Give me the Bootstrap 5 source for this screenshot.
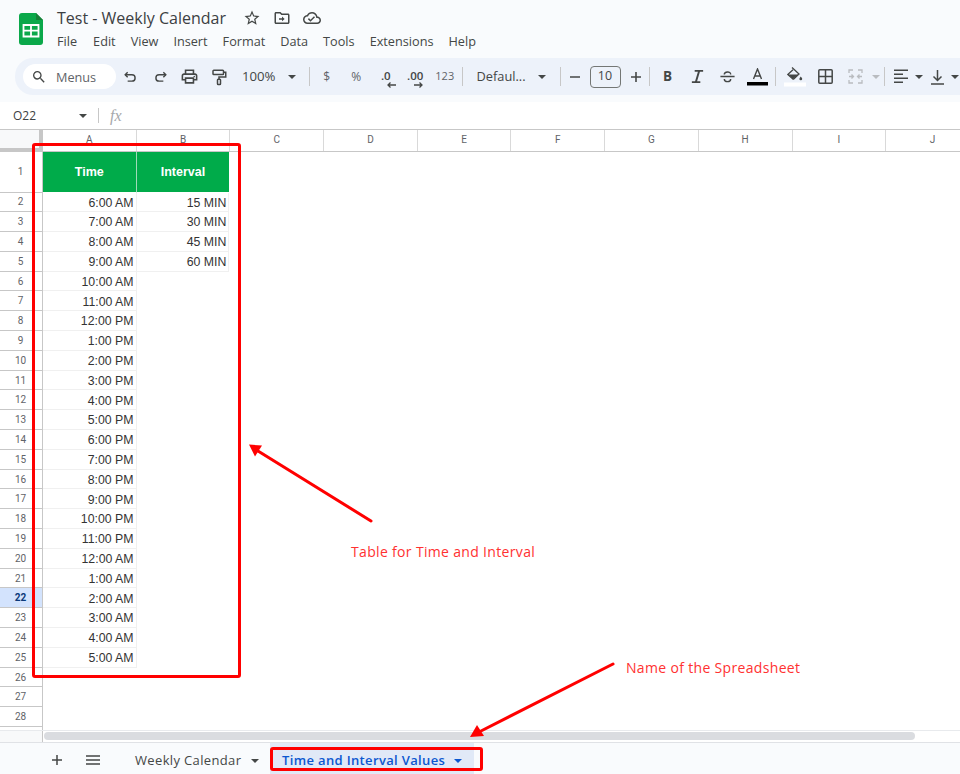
<!DOCTYPE html>
<html lang="en">
<head>
<meta charset="utf-8">
<title>Test - Weekly Calendar</title>
<link href="https://cdn.jsdelivr.net/npm/bootstrap@5.3.0/dist/css/bootstrap.min.css" rel="stylesheet">
<style>
html,body{height:774px;overflow:hidden;background:#fff}
body{font-family:"Open Sans",sans-serif;color:#444746;position:relative}
.appframe{height:774px;width:960px;overflow:hidden}
.tophead{height:58px;background:#f9fbfd;padding:7px 0 0 19px;flex:none}
.logoholder{width:24px;margin:6px 14px 0 0;flex:none}
.doctitle{font-size:16px;line-height:22px;color:#3c4043;height:22px}
.titleicons{margin-left:17px;gap:12px;align-items:center;color:#444746}
.menurow{gap:15px;font-size:12.7px;line-height:18px;margin-top:3px;color:#444746}
.menurow span:first-child{margin-right:1px}
.toolwrap{height:44px;background:#f9fbfd;padding-left:15px;flex:none}
.toolpill{height:37px;background:#edf2fa;border-radius:18px 0 0 18px;padding-left:8px;align-items:center;width:960px;overflow:hidden}
.searchpill{width:93px;height:25px;background:#fff;border-radius:13px;flex:none;padding-left:8px;font-size:12.7px;gap:9px;color:#5f6368;align-items:center}
.searchpill span{padding-top:2px}
.ti{flex:none;display:flex;align-items:center;justify-content:center;height:37px;width:29.5px;color:#444746;font-size:12px}
.tw30{width:30px}.tw22{width:22px}.tw26{width:26px}.tw10{width:11px}.tw8{width:8px}.tw32{width:32px}
.tsep{flex:none;width:6px;height:37px;display:flex;align-items:center;justify-content:center}
.tsep::after{content:"";display:block;width:1px;height:19px;background:#c7c7c7}
.zoomblock{flex:none;width:72px;height:37px;display:flex;align-items:center;padding:1px 0 0 8px;font-size:13.2px;color:#444746}
.fontblock{flex:none;width:92px;height:37px;display:flex;align-items:center;padding:0 0 0 11px;font-size:12.8px;color:#444746}
.tcaret{display:inline-block;width:0;height:0;border-left:4px solid transparent;border-right:4px solid transparent;border-top:4px solid #444746;flex:none}
.tcaretoff{border-top-color:#b9bcc0}
.zoomblock .tcaret{margin-left:12px}.fontblock .tcaret{margin-left:12px}
.sizebox{flex:none;width:31px;height:22px;margin:0 4px;border:1px solid #747775;border-radius:4px;font-size:12.5px;display:flex;align-items:center;justify-content:center;color:#444746}
.smallfmt{font-size:12px;color:#5f6368}
.smallnum{font-size:11px;color:#5f6368}
.decstack{font-weight:600;font-size:11.5px;line-height:11px;display:flex;flex-direction:column;align-items:flex-end;color:#444746;padding-top:4px}
.decstack svg{margin:1px -5px 0 0}
.boldb{font-weight:700;font-size:13.5px;color:#444746}
.formulabar{height:27px;background:#fff;flex:none;padding-left:13px;align-items:center;font-size:12px;color:#3c4043}
.namebox{width:66px;flex:none}
.fxsep{width:1px;height:15px;background:#c7c7c7;margin:0 11px 0 11px;flex:none}
.fxlabel{font-family:"Liberation Serif",serif;font-style:italic;font-size:16px;color:#a6a8ab;line-height:1}
.colheads{height:23px;flex:none;border-top:1px solid #c7c7c7;border-bottom:1px solid #c7c7c7;background:#fff;font-size:10px;color:#5f6368}
.corner{width:43px;flex:none;background:#f8f9fa;border-right:4px solid #c7c7c7;position:relative}
.corner::after{content:"";position:absolute;left:0;right:-4px;bottom:0;height:3px;background:#c7c7c7}
.colh{width:93.7px;flex:none;border-right:1px solid #d9d9d9;text-align:center;line-height:20px;font-family:Roboto,sans-serif}
.sheetarea{flex:1 1 auto;min-height:0;overflow:hidden;background:#fff}
.sheetgrid{display:grid;grid-template-columns:43px 93.5px 92.8px;grid-template-rows:40.5px;grid-auto-rows:19.8px;font-family:"Liberation Sans",sans-serif;font-size:12.3px;color:#333}
.rh{grid-column:1;border-right:1px solid #c7c7c7;border-bottom:1px solid #c7c7c7;text-align:center;font-family:Roboto,sans-serif;font-size:10px;color:#5f6368;display:flex;align-items:center;justify-content:center;padding-right:1px;background:#fff}
.rhsel{background:#d3e3fd;color:#0b3a7a;font-weight:700}
.ca,.cb{display:flex;align-items:center;justify-content:flex-end;padding:2px 2px 0 0;border-right:1px solid #f0f0f0;border-bottom:1px solid #f0f0f0}
.ca{grid-column:2}.cb{grid-column:3}
.hcell{background:#00ab4a;color:#fff;font-weight:700;font-size:12.5px;justify-content:center;padding:2px 0 0;border-bottom:1px solid #fff;border-right:1px solid #9fdab8}
.hcell.cb{border-right:0}
.scrollrow{height:12px;flex:none;background:#fff;border-top:1px solid #e8eaed;padding:1px 45px 0 0}
.scrollcorner{width:43px;background:#f8f9fa;border-right:1px solid #c7c7c7;flex:none;margin-top:-1px}
.thumb{width:871px;height:8px;background:#dadce0;border-radius:4px;margin-left:1px}
.tabbar{height:32px;flex:none;background:#f9fbfd;border-top:1px solid #e0e2e6;font-size:13px;letter-spacing:.35px;color:#444746;align-items:stretch}
.tabtool{flex:none;display:flex;align-items:center;justify-content:center;padding-top:3px}
.tabplus{width:28px;margin-left:43px}
.tabmenu{width:44px}
.tabone{width:128px;margin-left:20px;display:flex;align-items:center;gap:10px;flex:none;padding-top:4px}
.tabactive{width:204px;margin-left:7px;background:#e1e9f7;color:#0b57d0;font-weight:600;display:flex;align-items:center;padding:4px 0 0 12px;gap:9px;flex:none}
.tabactive .tcaret{border-top-color:#0b57d0}
.redbox{position:absolute;border:3px solid #ff0000;border-radius:3px;pointer-events:none}
.boxtable{left:32px;top:143px;width:209px;height:535px}
.boxtab{left:270px;top:747px;width:213px;height:24px}
.arrows{position:absolute;left:0;top:0}
.note{position:absolute;color:#ff3131;font-family:"Open Sans",sans-serif;font-size:14px;letter-spacing:.33px;line-height:18px;white-space:nowrap}
.notea{left:351px;top:543px}
.noteb{left:626px;top:659px}
</style>
</head>
<body>
<div class="appframe d-flex flex-column">
  <header class="tophead d-flex">
    <div class="logoholder">
      <svg width="24" height="32" viewBox="0 0 24 32"><path d="M3 0h14l7 7v22a3 3 0 0 1-3 3H3a3 3 0 0 1-3-3V3a3 3 0 0 1 3-3z" fill="#0ba84a"/><path d="M17 0l7 7h-7z" fill="#188038"/><path d="M4.500 12h15v11.500h-15z" fill="none" stroke="#fff" stroke-width="1.800"/><path d="M4.500 17.700h15M12 12v11.500" stroke="#fff" stroke-width="1.800"/></svg>
    </div>
    <div>
      <div class="d-flex">
        <div class="doctitle">Test - Weekly Calendar</div>
        <div class="titleicons d-flex">
          <svg width="18" height="18" viewBox="0 0 24 24" fill="#444746"><path d="M22 9.240l-7.190-.620L12 2 9.190 8.630 2 9.240l5.460 4.730L5.820 21 12 17.270 18.180 21l-1.630-7.030L22 9.240zM12 15.400l-3.760 2.270 1-4.280-3.320-2.880 4.380-.380L12 6.100l1.710 4.040 4.380.380-3.320 2.880 1 4.280L12 15.400z"/></svg>
          <svg width="18" height="18" viewBox="0 0 24 24" fill="#444746"><path d="M20 6h-8l-2-2H4c-1.100 0-2 .9-2 2v12c0 1.100.9 2 2 2h16c1.100 0 2-.9 2-2V8c0-1.100-.9-2-2-2zm0 12H4V6h5.170l2 2H20v10z"/><path d="M12 10v2.200H8v2h4v2.200l3.500-3.200z"/></svg>
          <svg width="18" height="18" viewBox="0 0 24 24" fill="#444746"><path d="M19.350 10.040C18.670 6.590 15.640 4 12 4 9.110 4 6.600 5.640 5.350 8.040 2.340 8.360 0 10.910 0 14c0 3.310 2.690 6 6 6h13c2.760 0 5-2.240 5-5 0-2.640-2.050-4.780-4.650-4.960zM19 18H6c-2.210 0-4-1.790-4-4 0-2.050 1.530-3.760 3.560-3.970l1.070-.110.500-.950C8.080 7.140 9.940 6 12 6c2.620 0 4.880 1.860 5.390 4.430l.300 1.500 1.530.110c1.560.1 2.780 1.410 2.780 2.960 0 1.650-1.350 3-3 3zm-9-3.820l-2.090-2.090L6.500 13.500 10 17l6.010-6.010-1.410-1.410z"/></svg>
        </div>
      </div>
      <nav class="menurow d-flex"><span>File</span><span>Edit</span><span>View</span><span>Insert</span><span>Format</span><span>Data</span><span>Tools</span><span>Extensions</span><span>Help</span></nav>
    </div>
  </header>

  <div class="toolwrap">
    <div class="toolpill d-flex">
      <div class="searchpill d-flex">
        <svg width="16" height="16" viewBox="0 0 24 24" fill="#444746"><path d="M15.500 14h-.79l-.28-.27A6.471 6.471 0 0 0 16 9.500 6.500 6.500 0 1 0 9.500 16c1.610 0 3.090-.59 4.230-1.570l.27.280v.79l5 4.990L20.490 19l-4.990-5zm-6 0C7.010 14 5 11.990 5 9.500S7.010 5 9.500 5 14 7.010 14 9.500 11.990 14 9.500 14z"/></svg>
        <span>Menus</span>
      </div>
      <div class="ti"><svg width="17" height="17" viewBox="0 0 24 24" fill="none" stroke="#444746" stroke-width="2"><path d="M8 6L4.500 9.500 8 13"/><path d="M4.500 9.500H14a4.500 4.500 0 0 1 0 9H8"/></svg></div>
      <div class="ti"><svg width="17" height="17" viewBox="0 0 24 24" fill="none" stroke="#444746" stroke-width="2"><path d="M16 6l3.500 3.500L16 13"/><path d="M19.500 9.500H10a4.500 4.500 0 0 0 0 9h6"/></svg></div>
      <div class="ti"><svg width="19" height="19" viewBox="0 0 24 24" fill="#444746"><path d="M19 8h-1V3H6v5H5c-1.660 0-3 1.340-3 3v6h4v4h12v-4h4v-6c0-1.660-1.340-3-3-3zM8 5h8v3H8V5zm8 12v2H8v-4h8v2zm2-2v-2H6v2H4v-4c0-.55.45-1 1-1h14c.55 0 1 .45 1 1v4h-2z"/><circle cx="18" cy="12" r="1"/></svg></div>
      <div class="ti"><svg width="18" height="18" viewBox="0 0 24 24" fill="none" stroke="#444746" stroke-width="2"><rect x="4" y="3" width="14" height="5.500" rx="1"/><path d="M18 5.500h3v6.500h-9v3"/><rect x="10" y="15" width="4" height="7" rx="1"/></svg></div>
      <div class="zoomblock"><span>100%</span><span class="tcaret"></span></div>
      <div class="tsep"></div>
      <div class="ti smallfmt">$</div>
      <div class="ti smallfmt">%</div>
      <div class="ti"><div class="decstack"><span>.0</span><svg width="9" height="6" viewBox="0 0 9 6" fill="none" stroke="#444746" stroke-width="1.300"><path d="M9 3H1M3.500.5L1 3l2.500 2.500"/></svg></div></div>
      <div class="ti"><div class="decstack"><span>.00</span><svg class="me-0" width="9" height="6" viewBox="0 0 9 6" fill="none" stroke="#444746" stroke-width="1.300"><path d="M0 3h8M5.500.5L8 3 5.500 5.500"/></svg></div></div>
      <div class="ti smallnum">123</div>
      <div class="tsep"></div>
      <div class="fontblock"><span>Defaul...</span><span class="tcaret"></span></div>
      <div class="tsep"></div>
      <div class="ti tw22"><svg width="12" height="12" viewBox="0 0 12 12"><path d="M1 6h10" stroke="#444746" stroke-width="1.600"/></svg></div>
      <div class="sizebox">10</div>
      <div class="ti tw22"><svg width="12" height="12" viewBox="0 0 12 12"><path d="M1 6h10M6 1v10" stroke="#444746" stroke-width="1.600"/></svg></div>
      <div class="tsep"></div>
      <div class="ti tw30 boldb">B</div>
      <div class="ti tw30"><svg width="15" height="15" viewBox="0 0 16 16" fill="none" stroke="#444746" stroke-width="2"><path d="M5 2h9M2 14h9M9.800 2L6.200 14"/></svg></div>
      <div class="ti tw30"><svg width="17" height="17" viewBox="0 0 24 24" fill="none" stroke="#444746" stroke-width="2"><path d="M2 12h20M7.500 9c0-4 9-5 9 0M7.500 15.500c0 5 9 5 9 0"/></svg></div>
      <div class="ti tw30"><svg width="21" height="18" viewBox="0 0 21 18"><path d="M6.500 11L10.500 1l4 10M7.800 8h5.400" fill="none" stroke="#444746" stroke-width="1.400"/><rect y="14" width="21" height="3.500" fill="#000"/></svg></div>
      <div class="tsep"></div>
      <div class="ti tw32"><svg width="22" height="20" viewBox="0 0 22 20"><path d="M8 0.500l7 6.500-5 4.800c-.4.4-1 .4-1.400 0L3.800 7.500 9 2.700" fill="none" stroke="#444746" stroke-width="1.300"/><path d="M4 7.500h10.500L9.300 12z" fill="#444746"/><path d="M16.800 9.500c-.9 1.200-1.400 1.900-1.400 2.400a1.400 1.400 0 0 0 2.800 0c0-.5-.5-1.200-1.400-2.400z" fill="#444746"/><rect y="15.500" width="22" height="4" fill="#fff"/></svg></div>
      <div class="ti tw30"><svg width="15" height="15" viewBox="0 0 15 15" fill="none" stroke="#444746" stroke-width="1.500"><rect x=".8" y=".8" width="13.400" height="13.400" rx="1"/><path d="M7.500 1v13M1 7.500h13"/></svg></div>
      <div class="ti tw30"><svg width="15" height="15" viewBox="0 0 15 15" fill="none" stroke="#b9bcc0" stroke-width="1.300"><path d="M1 4V1h4M1 11v3h4M14 4V1h-4M14 11v3h-4M1 7.500h4.500M3.500 5.500l2 2-2 2M14 7.500H9.500M11.500 5.500l-2 2 2 2"/></svg></div>
      <div class="ti tw10"><span class="tcaret tcaretoff"></span></div>
      <div class="tsep"></div>
      <div class="ti tw26"><svg width="14" height="15" viewBox="0 0 14 15" fill="#444746"><rect width="14" height="1.500" y=".5"/><rect width="9" height="1.500" y="4.500"/><rect width="14" height="1.500" y="8.500"/><rect width="9" height="1.500" y="12.500"/></svg></div>
      <div class="ti tw10"><span class="tcaret"></span></div>
      <div class="ti tw26"><svg width="13" height="16" viewBox="0 0 13 16" fill="none" stroke="#444746" stroke-width="1.500"><path d="M0 15h13M6.500 1v10M2.500 7.500l4 4 4-4"/></svg></div>
      <div class="ti tw8"><span class="tcaret"></span></div>
    </div>
  </div>

  <div class="formulabar d-flex">
    <div class="namebox">O22</div>
    <span class="tcaret"></span>
    <div class="fxsep"></div>
    <div class="fxlabel">fx</div>
  </div>

  <div class="colheads d-flex">
    <div class="corner"></div>
    <div class="colh">A</div><div class="colh">B</div><div class="colh">C</div><div class="colh">D</div><div class="colh">E</div><div class="colh">F</div><div class="colh">G</div><div class="colh">H</div><div class="colh">I</div><div class="colh">J</div>
  </div>

  <div class="sheetarea">
    <div class="sheetgrid">
      <div class="rh">1</div><div class="ca hcell">Time</div><div class="cb hcell">Interval</div>
      <div class="rh">2</div><div class="ca">6:00 AM</div><div class="cb">15 MIN</div>
      <div class="rh">3</div><div class="ca">7:00 AM</div><div class="cb">30 MIN</div>
      <div class="rh">4</div><div class="ca">8:00 AM</div><div class="cb">45 MIN</div>
      <div class="rh">5</div><div class="ca">9:00 AM</div><div class="cb">60 MIN</div>
      <div class="rh">6</div><div class="ca">10:00 AM</div>
      <div class="rh">7</div><div class="ca">11:00 AM</div>
      <div class="rh">8</div><div class="ca">12:00 PM</div>
      <div class="rh">9</div><div class="ca">1:00 PM</div>
      <div class="rh">10</div><div class="ca">2:00 PM</div>
      <div class="rh">11</div><div class="ca">3:00 PM</div>
      <div class="rh">12</div><div class="ca">4:00 PM</div>
      <div class="rh">13</div><div class="ca">5:00 PM</div>
      <div class="rh">14</div><div class="ca">6:00 PM</div>
      <div class="rh">15</div><div class="ca">7:00 PM</div>
      <div class="rh">16</div><div class="ca">8:00 PM</div>
      <div class="rh">17</div><div class="ca">9:00 PM</div>
      <div class="rh">18</div><div class="ca">10:00 PM</div>
      <div class="rh">19</div><div class="ca">11:00 PM</div>
      <div class="rh">20</div><div class="ca">12:00 AM</div>
      <div class="rh">21</div><div class="ca">1:00 AM</div>
      <div class="rh rhsel">22</div><div class="ca">2:00 AM</div>
      <div class="rh">23</div><div class="ca">3:00 AM</div>
      <div class="rh">24</div><div class="ca">4:00 AM</div>
      <div class="rh">25</div><div class="ca">5:00 AM</div>
      <div class="rh">26</div>
      <div class="rh">27</div>
      <div class="rh">28</div>
      <div class="rh"></div>
    </div>
  </div>

  <div class="scrollrow d-flex">
    <div class="scrollcorner"></div>
    <div class="thumb"></div>
  </div>

  <footer class="tabbar d-flex">
    <div class="tabtool tabplus"><svg width="12" height="12" viewBox="0 0 12 12"><path d="M1 6h10M6 1v10" stroke="#444746" stroke-width="1.500"/></svg></div>
    <div class="tabtool tabmenu"><svg width="14" height="10" viewBox="0 0 14 10"><path d="M0 1h14M0 5h14M0 9h14" stroke="#444746" stroke-width="1.300"/></svg></div>
    <div class="tabone"><span>Weekly Calendar</span><span class="tcaret"></span></div>
    <div class="tabactive"><span>Time and Interval Values</span><span class="tcaret"></span></div>
  </footer>
</div>

<div class="redbox boxtable"></div>
<div class="redbox boxtab"></div>
<svg class="arrows" width="960" height="774" viewBox="0 0 960 774">
  <path d="M371 521L258 451" stroke="#ff0000" stroke-width="3" stroke-linecap="round" fill="none"/>
  <path d="M249 444.500L262 445.500 255 456.500z" fill="#ff0000"/>
  <path d="M613 664L481 731" stroke="#ff0000" stroke-width="3" stroke-linecap="round" fill="none"/>
  <path d="M470 737L477 725 484 736z" fill="#ff0000"/>
</svg>
<div class="note notea">Table for Time and Interval</div>
<div class="note noteb">Name of the Spreadsheet</div>
<script src="https://cdn.jsdelivr.net/npm/bootstrap@5.3.0/dist/js/bootstrap.bundle.min.js"></script>
</body>
</html>
